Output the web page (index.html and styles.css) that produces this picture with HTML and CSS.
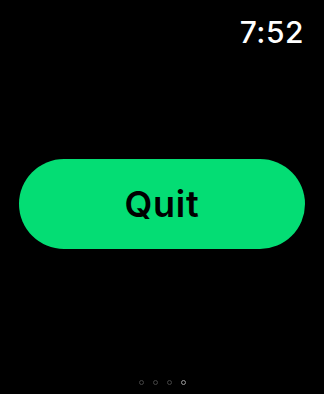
FILE: index.html
```html
<!DOCTYPE html>
<html lang="en">
<head>
    <meta charset="UTF-8">
    <meta name="viewport" content="width=device-width, initial-scale=1.0">
    <title>Quit</title>
    <link rel="stylesheet" href="styles.css">
</head>
<body>
    <div class="screen">
        <div class="status-bar">
            <span class="clock">7:52</span>
        </div>

        <div class="content">
            <button class="quit-btn">Quit</button>
        </div>

        <div class="pager">
            <span class="dot"></span>
            <span class="dot"></span>
            <span class="dot"></span>
            <span class="dot active"></span>
        </div>
    </div>
</body>
</html>
```

FILE: styles.css
```css
html, body {
    margin: 0;
    padding: 0;
    background-color: #000;
}
.screen {
    width: 324px;
    height: 394px;
    display: flex;
    flex-direction: column;
    font-family: Inter, Roboto, "Liberation Sans", sans-serif;
}
.status-bar {
    display: flex;
    justify-content: flex-end;
    padding: 12px 20px 0 0;
    height: 40px;
}
.clock {
    color: #fff;
    font-size: 30px;
    font-weight: 500;
    line-height: 40px;
    letter-spacing: 0.5px;
}
.content {
    flex: 1;
    display: flex;
    align-items: center;
    justify-content: center;
    padding: 0 19px 24px 19px;
}
.quit-btn {
    width: 286px;
    height: 90px;
    border: none;
    border-radius: 45px;
    background-color: #04dd74;
    color: #000;
    font-family: Inter, Roboto, "Liberation Sans", sans-serif;
    font-size: 36px;
    font-weight: 600;
    letter-spacing: 0.8px;
    cursor: pointer;
}
.pager {
    display: flex;
    justify-content: center;
    gap: 9px;
    height: 12px;
    padding-bottom: 2px;
}
.dot {
    width: 5px;
    height: 5px;
    box-sizing: border-box;
    border: 1px solid #444;
    border-radius: 50%;
}
.dot.active {
    border-color: #999;
}
```
